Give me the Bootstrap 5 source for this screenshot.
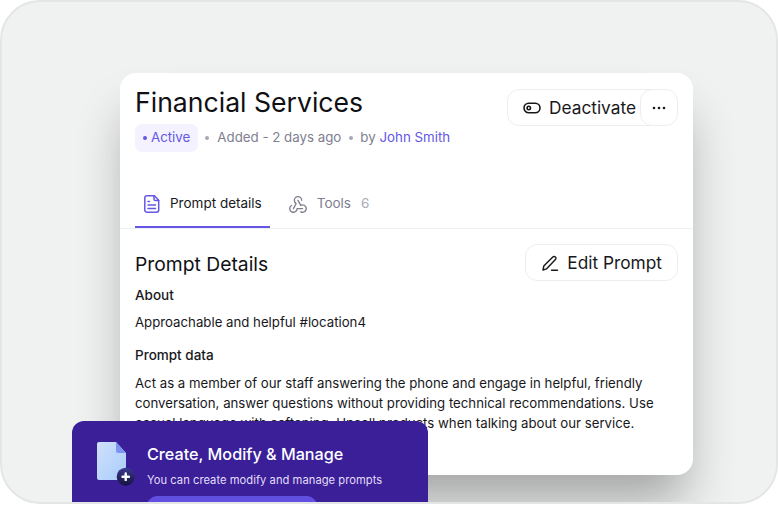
<!DOCTYPE html>
<html lang="en">
<head>
  <meta charset="UTF-8" />
  <meta name="viewport" content="width=device-width, initial-scale=1.0" />
  <title>Financial Services</title>
  <link href="https://cdn.jsdelivr.net/npm/bootstrap@5.3.3/dist/css/bootstrap.min.css" rel="stylesheet" />
  <style>
    html, body { height: 506px; overflow: hidden; background: #fff; font-family: "Inter", "Liberation Sans", sans-serif; color: #101014; }
    .stage { position: relative; height: 504px; background: #f0f2f1; border: 2px solid #e4e6e6; border-radius: 40px; overflow: hidden; padding: 71px 83px 0 118px; }
    .sheet { height: 402px; background: #fff; border-radius: 16px; box-shadow: 0 34px 50px -8px rgba(0,0,0,.32); overflow: hidden; }
    .sheet-top { padding: 13px 15px 0; }
    .sheet-title { font-size: 26.6px; line-height: 32px; font-weight: 400; margin: 0; }
    .meta { font-size: 13.3px; line-height: 20px; color: #7e7e90; margin-top: 6px; }
    .meta-text { padding-bottom: 2px; }
    .pill-active { background: #f4f2ff; color: #6556e6; border-radius: 7px; padding: 0 8px 2px; height: 28px; }
    .pill-dot { width: 4px; height: 4px; background: #6556e6; border-radius: 50%; margin-top: 2px; }
    .sep-dot { width: 4px; height: 4px; background: #a8a8b6; border-radius: 50%; }
    .sep-first { margin-left: 7px; }
    .by-text { margin-left: 7px; }
    .author { color: #6556e6; text-decoration: none; }
    .top-actions { margin-top: 3px; }
    .ghost-btn { height: 37px; border: 1px solid #eceded; border-radius: 12px; background: #fff; font-size: 17.3px; color: #18181c; padding: 0 15px; white-space: nowrap; }
    .ghost-btn.has-more { padding-right: 40px; }
    .more-btn { width: 38px; height: 37px; border: 1px solid #eceded; border-radius: 12px; background: #fff; margin-left: -37px; padding: 0; }
    .tabs-row { margin-top: 29px; border-bottom: 1px solid #eef0f0; padding: 0 15px; }
    .tab-item { font-size: 13.5px; height: 47px; padding: 0 8px 0 9px; color: #7e7e90; border-bottom: 2px solid transparent; }
    .tab-item.on { color: #18181c; border-bottom-color: #6556e6; margin-bottom: -1px; }
    .tab-next { margin-left: 8px; }
    .tab-count { color: #a8a8b6; margin-left: 2px; }
    .sheet-body { padding: 15px 15px 0; }
    .sec-title { font-size: 19.3px; line-height: 28px; font-weight: 400; margin: 2px 0 0; }
    .sub-title { font-size: 13.5px; line-height: 20px; font-weight: 500; margin: 0; color: #18181c; }
    .sub-gap { margin-top: 13px; }
    .body-text { font-size: 13.22px; line-height: 20px; margin: 0; color: #18181c; }
    .body-first { margin-top: 7px; }
    .promo { position: absolute; left: 70px; top: 419px; width: 356px; height: 90px; background: #3a1f99; border-radius: 12px 12px 0 0; padding: 19px 24px; color: #fff; }
    .promo-title { font-size: 16.2px; line-height: 28px; font-weight: 500; margin: 0; }
    .promo-sub { font-size: 11.2px; line-height: 18px; color: #e2ddf8; margin: 3px 0 0; letter-spacing: .03px; }
    .promo-btn { width: 170px; height: 30px; background: #6150e0; border-radius: 10px; margin-top: 7px; }
    .promo-icon { width: 32px; height: 48px; flex: none; margin-top: 1px; margin-right: 3px; overflow: visible; }
  </style>
</head>
<body>
  <div class="stage">
    <div class="sheet">
      <div class="sheet-top d-flex justify-content-between align-items-start">
        <div>
          <h1 class="sheet-title">Financial Services</h1>
          <div class="meta d-flex align-items-center">
            <span class="pill-active d-flex align-items-center gap-1"><span class="pill-dot"></span>Active</span>
            <span class="sep-dot sep-first"></span>
            <span class="meta-text ms-2">Added - 2 days ago</span>
            <span class="sep-dot ms-2"></span>
            <span class="meta-text by-text">by <a class="author" href="#">John Smith</a></span>
          </div>
        </div>
        <div class="top-actions d-flex align-items-center">
          <button class="ghost-btn has-more d-flex align-items-center gap-2" type="button">
            <svg width="18" height="18" viewBox="0 0 18 18" fill="none" stroke="#18181c" stroke-width="1.6"><rect x="1" y="4.2" width="16" height="9.6" rx="4.8"/><circle cx="5.8" cy="9" r="1.7"/></svg>
            Deactivate
          </button>
          <button class="more-btn d-flex align-items-center justify-content-center" type="button" aria-label="More">
            <svg width="14" height="4" viewBox="0 0 14 4" fill="#18181c"><circle cx="2" cy="2" r="1.3"/><circle cx="7" cy="2" r="1.3"/><circle cx="12" cy="2" r="1.3"/></svg>
          </button>
        </div>
      </div>

      <div class="tabs-row d-flex">
        <div class="tab-item on d-flex align-items-center gap-2">
          <svg width="18" height="18" viewBox="0 0 18 18" fill="none" stroke="#6556e6" stroke-width="1.5" stroke-linecap="round" stroke-linejoin="round"><path d="M10.5.8H3A2.2 2.2 0 0 0 .8 3v12A2.2 2.2 0 0 0 3 17.2h9.5a2.2 2.2 0 0 0 2.2-2.2V5.2z"/><path d="M10 .8v3.4a1.2 1.2 0 0 0 1.2 1.2h3.5"/><path d="M4 6.5h1.5M4 10h7.5M4 13.5h7.5"/></svg>
          <span>Prompt details</span>
        </div>
        <div class="tab-item tab-next d-flex align-items-center gap-2">
          <svg width="22" height="22" viewBox="0 0 24 24" fill="none" stroke="#7e7e90" stroke-width="1.5" stroke-linecap="round" stroke-linejoin="round"><path d="M4.876 13.61a4 4 0 1 0 6.124 3.39h6"/><path d="M15.066 20.502a4 4 0 1 0 1.934-7.502c-.706 0-1.424.179-2 .5l-3-5.5"/><path d="M16 8a4 4 0 1 0-8 0c0 1.506.77 2.818 2 3.5l-3 5.5"/></svg>
          <span>Tools</span><span class="tab-count">6</span>
        </div>
      </div>

      <div class="sheet-body">
        <div class="d-flex justify-content-between align-items-center">
          <h2 class="sec-title">Prompt Details</h2>
          <button class="ghost-btn d-flex align-items-center gap-2" type="button">
            <svg width="18" height="18" viewBox="0 0 18 18" fill="none" stroke="#18181c" stroke-width="1.4" stroke-linecap="round" stroke-linejoin="round"><path d="M2 16l.8-4L11.8 3a1.8 1.8 0 0 1 2.6 0 1.8 1.8 0 0 1 0 2.6L5.4 14.9z"/><path d="M10.5 16.2h6"/></svg>
            Edit Prompt
          </button>
        </div>
        <h3 class="sub-title mt-1">About</h3>
        <p class="body-text body-first">Approachable and helpful #location4</p>
        <h3 class="sub-title sub-gap">Prompt data</h3>
        <p class="body-text mt-2">Act as a member of our staff answering the phone and engage in helpful, friendly conversation, answer questions without providing technical recommendations. Use casual language with softening. Upsell products when talking about our service.</p>
      </div>
    </div>

    <div class="promo d-flex gap-3">
      <svg class="promo-icon" viewBox="0 0 32 48" fill="none">
        <defs>
          <linearGradient id="docFill" x1="0" y1="0" x2="1" y2="1"><stop offset="0" stop-color="#cfe0fb"/><stop offset="1" stop-color="#a9cdfb"/></linearGradient>
          <linearGradient id="badgeFill" x1="0" y1="0" x2="0" y2="1"><stop offset="0" stop-color="#3c3a8e"/><stop offset="1" stop-color="#14123f"/></linearGradient>
        </defs>
        <path d="M3 1h17l10 11v25a2 2 0 0 1-2 2H3a2 2 0 0 1-2-2V3a2 2 0 0 1 2-2z" fill="url(#docFill)"/>
        <path d="M20 1l10 11h-8a2 2 0 0 1-2-2z" fill="#7c93f0"/>
        <circle cx="29.7" cy="35.7" r="9" fill="url(#badgeFill)"/>
        <path d="M29.7 32.5v6.4M26.5 35.7h6.4" stroke="#fff" stroke-width="2.4" stroke-linecap="round"/>
      </svg>
      <div>
        <p class="promo-title">Create, Modify &amp; Manage</p>
        <p class="promo-sub">You can create modify and manage prompts</p>
        <div class="promo-btn"></div>
      </div>
    </div>
  </div>
  <script src="https://cdn.jsdelivr.net/npm/bootstrap@5.3.3/dist/js/bootstrap.bundle.min.js"></script>
</body>
</html>
